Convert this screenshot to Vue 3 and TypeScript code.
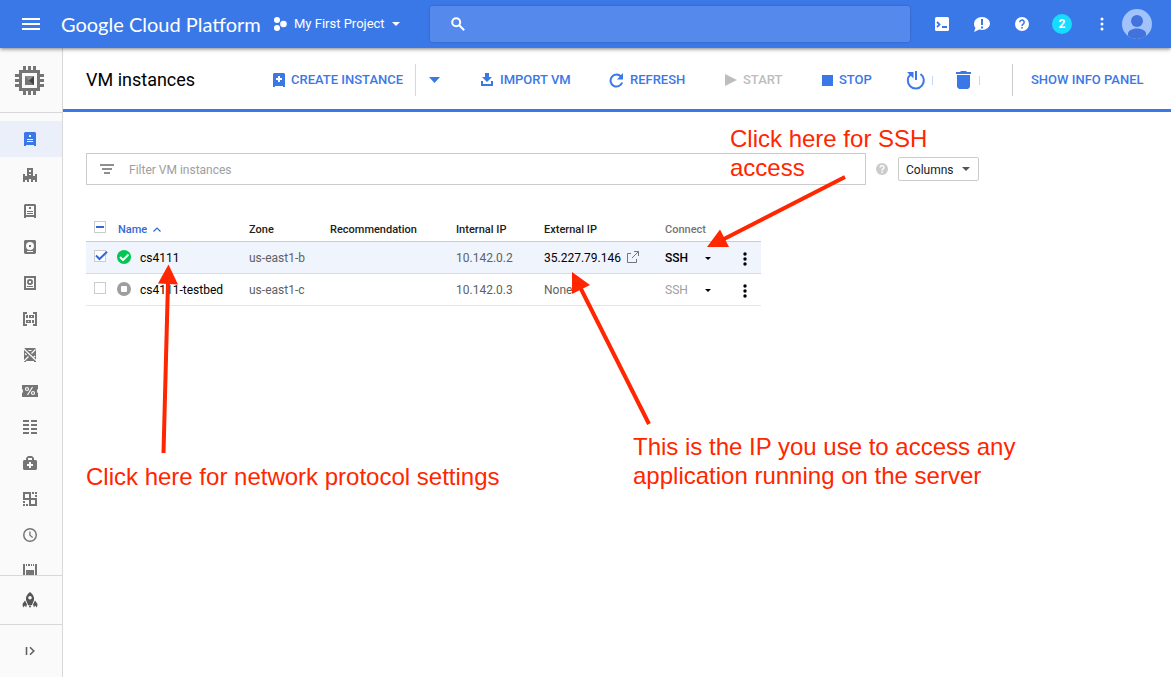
<script setup lang="ts">
import { ref } from 'vue'

interface NavItem { label: string; path: string; cutout?: string; active?: boolean }
interface Instance { name: string; zone: string; internalIp: string; externalIp: string; running: boolean; selected: boolean }

const search = ref('')
const filter = ref('')

const navItems: NavItem[] = [
  { label: 'VM instances', active: true, path: 'M3 1h10l1 1v13h-2v-1H4v1H2V2zM7 4v2h2V4zM5 8v1h6V8zM5 10v1h6v-1z' },
  { label: 'Instance groups', path: 'M5 1h6v6H5zM7 3v2h2V3zM1 7h2v2h2V7h2v1h2V7h2v2h2V7h2v8h-2v-2h-2v2H9v-3H7v3H5v-2H3v2H1z' },
  { label: 'Instance templates', path: 'M3 1h10l1 1v13h-2v-1H4v1H2V2zM4 3v9h8V3zM7 4h2v2H7zM5 8h6v1H5zM5 10h6v1H5z' },
  { label: 'Disks', path: 'M3 1h10l1 1v12l-1 1H3l-1-1V2zM8 3a4 4 0 1 0 0 8 4 4 0 0 0 0-8zM7 6h2v2H7zM5 12v1h6v-1z' },
  { label: 'Snapshots', path: 'M2 1h12v14H2zM4 3v10h8V3zM8 4a3 3 0 1 1 0 6 3 3 0 0 1 0-6zM7 6v2h2V6zM5 11h6v1H5z' },
  { label: 'Images', path: 'M1 1h4v2H3v10h2v2H1zM11 1h4v14h-4v-2h2V3h-2zM4 4h2v3H4zM7 4h5v3H7zM9 5v1h1V5zM4 9h5v3H4zM6 10v1h1v-1zM10 9h2v3h-2z' },
  { label: 'TPUs', path: 'M3 1h10l1 1v13h-2v-1H4v1H2V2z', cutout: 'M2 2l12 11.500M13.500 2.500L9.500 6.500M6.500 9.500L2 14M6.500 3.500h3M3 6.500l1.500 1.500M11 11l2-2' },
  { label: 'Committed use discounts', path: 'M0 2h16v4a1 2 0 0 0 0 4v4H0v-4a1 2 0 0 0 0-4z', cutout: 'M5 4.500a1.500 1.500 0 1 0 0 3 1.500 1.500 0 0 0 0-3M11 8.500a1.500 1.500 0 1 0 0 3 1.500 1.500 0 0 0 0-3M10.500 4L5.500 12' },
  { label: 'Metadata', path: 'M1 1h6v2H1zM9 1h6v2H9zM1 5h6v2H1zM9 5h6v2H9zM1 9h6v2H1zM9 9h6v2H9zM1 13h6v2H1zM9 13h6v2H9z' },
  { label: 'Health checks', path: 'M6 1h4l2 2v2h2l1 1v8l-1 1H2l-1-1V6l1-1h2V3zM6 3v2h4V3zM7 7v2H5v2h2v2h2v-2h2V9H9V7z' },
  { label: 'Zones', path: 'M1 1h8v6h6v8H7V9H1zM3 3v4h4V3zM9 9v4h4V9zM10 1h2v2h-2zM13 1h2v2h-2zM13 4h2v2h-2zM1 10h2v2H1zM1 13h2v2H1zM4 13h2v2H4z' },
  { label: 'Operations', path: 'M8 1a7 7 0 1 1 0 14A7 7 0 0 1 8 1zM8 2.500a5.500 5.500 0 1 0 0 11 5.500 5.500 0 0 0 0-11zM7.300 4.500h1.300v3.500l2.500 2-.800 1-3-2.400z' },
  { label: 'Quotas', path: 'M1 1h2v14H1zM13 1h2v14h-2zM4 1h1v2H4zM6 1h2v2H6zM9 1h1v2H9zM11 1h1v2h-1zM4 7h8v6H4z' },
]

const instances = ref<Instance[]>([
  { name: 'cs4111', zone: 'us-east1-b', internalIp: '10.142.0.2', externalIp: '35.227.79.146', running: true, selected: true },
  { name: 'cs4111-testbed', zone: 'us-east1-c', internalIp: '10.142.0.3', externalIp: 'None', running: false, selected: false },
])
</script>

<template>
  <div class="app">
    <header class="topbar">
      <button class="icon-btn menu" aria-label="Navigation menu">
        <svg width="18" height="12" viewBox="0 0 18 12"><path fill="#fff" d="M0 0h18v2H0zM0 5h18v2H0zM0 10h18v2H0z" /></svg>
      </button>
      <a href="#" class="brand">Google Cloud Platform</a>
      <button class="project">
        <svg width="14" height="14" viewBox="0 0 14 14" fill="#fff"><circle cx="4" cy="3" r="3" /><circle cx="4" cy="11" r="3" /><circle cx="10.500" cy="7" r="3.300" /></svg>
        <span>My First Project</span>
        <svg width="8" height="4" viewBox="0 0 8 4"><path fill="#fff" d="M0 0h8L4 4z" /></svg>
      </button>
      <label class="search">
        <svg width="14" height="14" viewBox="0 0 14 14" fill="none" stroke="#fff" stroke-width="2"><circle cx="5.200" cy="5.200" r="4" /><path d="M8.200 8.200l5 5" /></svg>
        <input v-model="search" type="search" aria-label="Search products and resources" />
      </label>
      <div class="utilities">
        <button class="icon-btn" aria-label="Activate Cloud Shell">
          <svg width="16" height="16" viewBox="0 0 16 16"><rect x="1" y="1" width="14" height="14" rx="1.500" fill="#fff" /><path d="M3 6L5.500 8.500 3 11M8 11h5" fill="none" stroke="#3b78e7" stroke-width="1.800" /></svg>
        </button>
        <button class="icon-btn" aria-label="Send feedback">
          <svg width="16" height="16" viewBox="0 0 16 16"><path fill="#fff" d="M8 1c4.500 0 8 3 8 6.600S12.500 14 8 14c-1 0-2-.1-2.800-.4L0 16l1.500-4C.5 11 0 9.500 0 7.800 0 4 3.500 1 8 1z" /><path fill="#3b78e7" d="M7 3h2v6H7zM7 10.500h2v2H7z" /></svg>
        </button>
        <button class="icon-btn" aria-label="Help">
          <svg width="14" height="14" viewBox="0 0 14 14"><circle cx="7" cy="7" r="7" fill="#fff" /><path d="M4.800 5.200a2.200 2.200 0 1 1 3.600 1.700C7.500 7.500 7 7.900 7 9" fill="none" stroke="#3b78e7" stroke-width="1.500" /><path fill="#3b78e7" d="M6.200 10h1.600v1.600H6.200z" /></svg>
        </button>
        <button class="badge" aria-label="2 notifications">2</button>
        <button class="icon-btn" aria-label="More options">
          <svg width="4" height="14" viewBox="0 0 4 14" fill="#fff"><circle cx="2" cy="2" r="1.500" /><circle cx="2" cy="7" r="1.500" /><circle cx="2" cy="12" r="1.500" /></svg>
        </button>
        <button class="icon-btn" aria-label="Account">
          <svg width="30" height="30" viewBox="0 0 30 30"><circle cx="15" cy="15" r="15" fill="#a1c2fa" /><circle cx="15" cy="12" r="6" fill="#4272db" /><path fill="#4272db" d="M6 27v-3c1-3 5-4.500 9-4.500s8 1.500 9 4.500v3a15 15 0 0 1-18 0z" /></svg>
        </button>
      </div>
    </header>

    <div class="body">
      <aside class="sidebar">
        <a href="#" class="product" aria-label="Compute Engine">
          <svg width="29" height="29" viewBox="0 0 29 29">
            <path fill="#757575" fill-rule="evenodd" d="M8 0h3v4h2V0h3v4h2V0h3v4h4v4h4v3h-4v2h4v3h-4v2h4v3h-4v4h-4v4h-3v-4h-2v4h-3v-4h-2v4H8v-4H4v-4H0v-3h4v-2H0v-3h4v-2H0V8h4V4h4zM7 7v15h15V7z" />
            <path fill="#757575" d="M10 10h9v9h-9z" /><path fill="#424242" d="M19 10v9l-5-4.500z" /><path fill="#8d8d8d" d="M10 10h9l-5 4.500z" />
          </svg>
        </a>
        <nav class="nav" aria-label="Compute Engine">
          <a v-for="item in navItems" :key="item.label" href="#" :class="{ active: item.active }" :aria-label="item.label">
            <svg width="16" height="16" viewBox="0 0 16 16"><path fill="currentColor" fill-rule="evenodd" :d="item.path" /><path v-if="item.cutout" :d="item.cutout" stroke="#fafafa" stroke-width="1.200" fill="none" /></svg>
          </a>
        </nav>
        <a href="#" class="launcher" aria-label="Marketplace">
          <svg width="16" height="16" viewBox="0 0 16 16" fill="#555"><path fill-rule="evenodd" d="M8 0c3 2 4.500 5 4 8l-2 5H6L4 8C3.500 5 5 2 8 0zM8 4a1.800 1.800 0 1 0 0 3.600A1.800 1.800 0 0 0 8 4z" /><path d="M3 8.500l2 4-1 3-1-2-2 2-.5-3.500zM13 8.500l-2 4 1 3 1-2 2 2 .5-3.500zM6.500 13.500h3L8 16z" /></svg>
        </a>
        <button class="collapse" aria-label="Expand menu">
          <svg width="10" height="10" viewBox="0 0 10 10" fill="none" stroke="#616161" stroke-width="1.600"><path d="M1.500 1v8M5 1.200L8.800 5 5 8.800" /></svg>
        </button>
      </aside>

      <main class="main">
        <div class="toolbar">
          <h1>VM instances</h1>
          <button class="action">
            <svg width="12" height="14" viewBox="0 0 12 14"><path fill="#3b78e7" fill-rule="evenodd" d="M1 0h10l1 1v13h-2v-1H2v1H0V1zM5 3v2H3v2h2v2h2V7h2V5H7V3z" /></svg>
            <span>CREATE INSTANCE</span>
          </button>
          <button class="action more" aria-label="More ways to create">
            <svg width="11" height="6" viewBox="0 0 11 6"><path fill="#3b78e7" d="M0 0h11L5.500 6z" /></svg>
          </button>
          <button class="action">
            <svg width="14" height="14" viewBox="0 0 14 14"><path fill="#3b78e7" d="M5 0h4v4h3L7 9 2 4h3zM1 8h2v3h8V8h2v5H1z" /></svg>
            <span>IMPORT VM</span>
          </button>
          <button class="action">
            <svg width="15" height="15" viewBox="0 0 15 15"><path fill="none" stroke="#3b78e7" stroke-width="2" d="M12 3.500A6 6 0 1 0 13.200 9.500" /><path fill="#3b78e7" d="M14 0v6.500H8z" /></svg>
            <span>REFRESH</span>
          </button>
          <button class="action" disabled>
            <svg width="12" height="12" viewBox="0 0 12 12"><path fill="#bdbdbd" d="M0 0l12 6-12 6z" /></svg>
            <span>START</span>
          </button>
          <button class="action">
            <svg width="11" height="11" viewBox="0 0 11 11"><path fill="#3b78e7" d="M0 0h11v11H0z" /></svg>
            <span>STOP</span>
          </button>
          <button class="action" aria-label="Reset">
            <svg width="20" height="20" viewBox="0 0 20 20"><path fill="none" stroke="#3b78e7" stroke-width="2" d="M14.500 4A8 8 0 1 1 4.500 4.500M10 1v9" /><path fill="#3b78e7" d="M1 2h6.500v6.500z" /></svg>
            <i class="tick"></i>
          </button>
          <button class="action delete" aria-label="Delete">
            <svg width="15" height="18" viewBox="0 0 15 18"><path fill="#3b78e7" d="M0 1h4l1-1h5l1 1h4v2H0zM1 4h13v12l-2 2H3l-2-2z" /></svg>
            <i class="tick"></i>
          </button>
          <button class="action info">SHOW INFO PANEL</button>
        </div>

        <section class="content">
          <div class="filter-row">
            <label class="filter">
              <svg width="14" height="10" viewBox="0 0 14 10"><path fill="#8f8f8f" d="M0 0h14v2H0zM2 4h10v2H2zM4 8h6v2H4z" /></svg>
              <input v-model="filter" type="text" placeholder="Filter VM instances" aria-label="Filter VM instances" />
            </label>
            <button class="icon-btn hint" aria-label="Filter help">
              <svg width="12" height="12" viewBox="0 0 14 14"><circle cx="7" cy="7" r="7" fill="#ccc" /><path d="M4.800 5.200a2.200 2.200 0 1 1 3.600 1.700C7.500 7.500 7 7.900 7 9" fill="none" stroke="#fff" stroke-width="1.600" /><path fill="#fff" d="M6.200 10h1.600v1.600H6.200z" /></svg>
            </button>
            <div class="columns">
              <select aria-label="Columns"><option>Columns</option></select>
              <svg width="8" height="4" viewBox="0 0 8 4"><path fill="#555" d="M0 0h8L4 4z" /></svg>
            </div>
          </div>

          <table class="instances">
            <colgroup>
              <col class="c-check" /><col class="c-name" /><col class="c-zone" /><col class="c-rec" /><col class="c-int" /><col class="c-ext" /><col class="c-conn" /><col class="c-menu" />
            </colgroup>
            <thead>
              <tr>
                <th>
                  <label class="check"><input type="checkbox" aria-label="Select all" :indeterminate.prop="true" /><svg width="14" height="10" viewBox="0 0 14 10"><path fill="#3367d6" d="M2 4h8v2H2z" /></svg></label>
                </th>
                <th class="sorted">Name <svg width="8" height="5" viewBox="0 0 8 5"><path fill="none" stroke="#3367d6" stroke-width="1.200" d="M.5 4.500L4 1l3.500 3.500" /></svg></th>
                <th>Zone</th>
                <th>Recommendation</th>
                <th>Internal IP</th>
                <th>External IP</th>
                <th class="quiet">Connect</th>
                <th></th>
              </tr>
            </thead>
            <tbody>
              <tr v-for="vm in instances" :key="vm.name" :class="{ selected: vm.selected }">
                <td>
                  <label class="check"><input v-model="vm.selected" type="checkbox" :aria-label="'Select ' + vm.name" /><svg v-if="vm.selected" width="14" height="10" viewBox="0 0 14 10"><path fill="none" stroke="#3367d6" stroke-width="2" d="M2 4.500L5.500 8 13 .8" /></svg></label>
                </td>
                <td>
                  <div class="name">
                    <svg v-if="vm.running" width="14" height="14" viewBox="0 0 14 14"><circle cx="7" cy="7" r="7" fill="#00c752" /><path fill="none" stroke="#fff" stroke-width="2" d="M3 7l3 3 5.500-5.500" /></svg>
                    <svg v-else width="14" height="14" viewBox="0 0 14 14"><circle cx="7" cy="7" r="7" fill="#9e9e9e" /><rect x="4" y="4" width="6" height="6" rx="1" fill="#fff" /></svg>
                    <a href="#">{{ vm.name }}</a>
                  </div>
                </td>
                <td>{{ vm.zone }}</td>
                <td></td>
                <td>{{ vm.internalIp }}</td>
                <td>
                  <a v-if="vm.running" href="#" class="ext">{{ vm.externalIp }}
                    <svg width="12" height="12" viewBox="0 0 12 12" fill="none" stroke="#757575"><path d="M4 2.500H.5v9h9V8M7 .5h4.500V5M11.500.5L5 7" /></svg>
                  </a>
                  <template v-else>{{ vm.externalIp }}</template>
                </td>
                <td>
                  <div class="connect">
                    <button class="ssh" :disabled="!vm.running">SSH</button>
                    <button class="icon-btn" :aria-label="'Connection options for ' + vm.name"><svg width="6" height="3" viewBox="0 0 6 3"><path d="M0 0h6L3 3z" /></svg></button>
                  </div>
                </td>
                <td>
                  <button class="icon-btn dots" :aria-label="'Actions for ' + vm.name"><svg width="4" height="14" viewBox="0 0 4 14"><circle cx="2" cy="2" r="1.700" /><circle cx="2" cy="7" r="1.700" /><circle cx="2" cy="12" r="1.700" /></svg></button>
                </td>
              </tr>
            </tbody>
          </table>
        </section>
      </main>
    </div>

    <div class="notes">
      <svg width="1171" height="677" viewBox="0 0 1171 677" fill="#ff2600" stroke="#ff2600" aria-hidden="true">
        <g stroke-width="4" fill="none"><path d="M163.500 453L168 282" /><path d="M845 177L724 239" /><path d="M649 424L580 287" /></g>
        <g stroke="none"><path d="M168.500 264.500L178 284.500 158 283.500z" /><path d="M707 247L720 229.500 729 247z" /><path d="M572 272L590 285 572 294z" /></g>
      </svg>
      <p class="note ssh-note">Click here for SSH<br />access</p>
      <p class="note network-note">Click here for network protocol settings</p>
      <p class="note ip-note">This is the IP you use to access any<br />application running on the server</p>
    </div>
  </div>
</template>

<style>
body { margin: 0; }
</style>

<style scoped>
.app { position: relative; display: flex; flex-direction: column; height: 100vh; overflow: hidden; background: #fff; color: #000; font-family: Roboto, "Liberation Sans", sans-serif; font-size: 12px; line-height: 16px; }
.app * { box-sizing: border-box; }
svg { display: block; flex: none; }
a { color: inherit; text-decoration: none; }
button, input, select { margin: 0; padding: 0; border: 0; background: none; color: inherit; font: inherit; outline: none; }
button { cursor: pointer; }
.icon-btn { display: flex; align-items: center; justify-content: center; }

.topbar { position: relative; z-index: 1; display: grid; grid-template-columns: 61px 212px 157px minmax(120px, 1fr) 261px; align-items: center; height: 48px; flex: none; background: #3b78e7; color: #fff; box-shadow: 0 1px 4px rgba(0, 0, 0, .5); }
.brand { font-family: Lato, sans-serif; font-size: 20px; line-height: 24px; white-space: nowrap; }
.project { display: flex; align-items: center; gap: 7px; font-size: 13px; white-space: nowrap; }
.search { display: flex; align-items: center; gap: 12px; height: 36px; padding: 0 21px; border-radius: 2px; background: #5589ec; box-shadow: 0 0 2px rgba(0, 0, 0, .3); }
.search input { flex: 1; min-width: 0; }
.utilities { display: grid; grid-template-columns: 40px 40px 40px 40px 39px 32px; padding-left: 12px; align-items: center; justify-items: center; }
.badge { width: 20px; height: 20px; border-radius: 50%; background: #18dcff; font-size: 12px; font-weight: 700; }

.body { display: flex; flex: 1; min-height: 0; }
.sidebar { display: flex; flex-direction: column; width: 63px; flex: none; border-right: 1px solid #d8d8d8; background: #fafafa; color: #757575; }
.product { display: flex; align-items: center; height: 65px; flex: none; padding-left: 15px; border-bottom: 1px solid #d8d8d8; }
.nav { flex: 1; min-height: 0; padding-top: 8px; overflow: hidden; }
.nav a { display: flex; align-items: center; height: 36px; padding-left: 22px; }
.nav .active { background: #ebeffa; color: #3b78e7; }
.launcher { display: flex; align-items: center; height: 49px; flex: none; padding-left: 22px; border-top: 1px solid #d8d8d8; }
.collapse { display: flex; align-items: center; height: 53px; flex: none; padding-left: 25px; border-top: 1px solid #d8d8d8; }

.main { flex: 1; min-width: 0; }
.toolbar { display: grid; grid-template-columns: 187px 142px 65px 129px 116px 97px 84px 50px 56px 1fr; align-items: center; height: 64px; padding: 3px 26px 0 23px; border-bottom: 3px solid #3b78e7; color: #3b78e7; }
h1 { margin: 0; color: #000; font-size: 18px; font-weight: 400; line-height: 24px; }
.action { display: flex; align-items: center; gap: 6px; height: 32px; font-size: 13px; font-weight: 500; white-space: nowrap; }
.action:disabled { color: #bdbdbd; cursor: default; }
.more { padding-left: 13px; border-left: 1px solid #d8d8d8; }
.delete { gap: 8px; }
.tick { width: 1px; height: 9px; background: #c5d7f8; }
.info { justify-self: start; padding-left: 18px; border-left: 1px solid #ccc; }

.content { padding: 41px 23px 0; }
.filter-row { display: flex; align-items: center; }
.filter { display: flex; align-items: center; gap: 15px; flex: 0 1 780px; min-width: 200px; height: 32px; padding: 0 13px; border: 1px solid #ccc; }
.filter input { flex: 1; min-width: 0; padding-top: 2px; }
.filter input::placeholder { color: #9e9e9e; opacity: 1; }
.hint { padding: 0 10px; }
.columns { position: relative; width: 81px; height: 24px; }
.columns select { width: 100%; height: 100%; padding: 2px 0 0 7px; border: 1px solid #ccc; border-radius: 2px; background: #fff; color: #212121; appearance: none; }
.columns svg { position: absolute; top: 10px; right: 9px; pointer-events: none; }

.instances { width: 675px; margin-top: 32px; border-collapse: collapse; table-layout: fixed; color: #616161; }
.c-check { width: 31px; } .c-name { width: 132px; } .c-zone { width: 81px; } .c-rec { width: 126px; } .c-int { width: 88px; } .c-ext { width: 121px; } .c-conn { width: 72px; } .c-menu { width: 24px; }
.instances th, .instances td { padding: 2px 0 0; text-align: left; white-space: nowrap; }
.instances th { height: 24px; border-bottom: 1px solid #ccc; color: #212121; font-size: 11px; font-weight: 500; }
.instances td { height: 32px; border-bottom: 1px solid #e3e6ea; }
.instances .selected td { border-bottom-color: #d5dbe8; background: #f0f4fd; }
.instances .sorted { padding-left: 1px; color: #3367d6; }
.sorted svg { display: inline-block; margin: 0 0 1px 3px; }
.instances .quiet { color: #757575; }
.check { position: relative; display: block; width: 12px; height: 12px; margin: 0 0 4px 8px; }
th .check { margin-bottom: 6px; }
.check input { display: block; width: 12px; height: 12px; border: 1px solid #ccc; border-radius: 0; background: #fff; appearance: none; }
.check svg { position: absolute; top: 1px; left: 0; pointer-events: none; }
.name { display: flex; align-items: center; gap: 9px; color: #000; }
.name svg { margin-bottom: 2px; }
.ext { display: flex; align-items: center; gap: 6px; color: #000; }
.ext svg { margin-bottom: 2px; }
.connect { display: flex; align-items: center; gap: 17px; }
.ssh { color: #000; font-weight: 500; }
.ssh:disabled { color: #9e9e9e; font-weight: 400; }
.dots { width: 16px; height: 24px; padding-top: 2px; }

.notes { position: absolute; inset: 0; z-index: 2; pointer-events: none; }
.note { position: absolute; margin: 0; color: #ff2600; font-family: "Liberation Sans", Arial, sans-serif; font-size: 24px; line-height: 29px; white-space: nowrap; }
.ssh-note { left: 730px; top: 124px; }
.network-note { left: 86px; top: 462px; }
.ip-note { left: 633px; top: 432px; }
</style>
